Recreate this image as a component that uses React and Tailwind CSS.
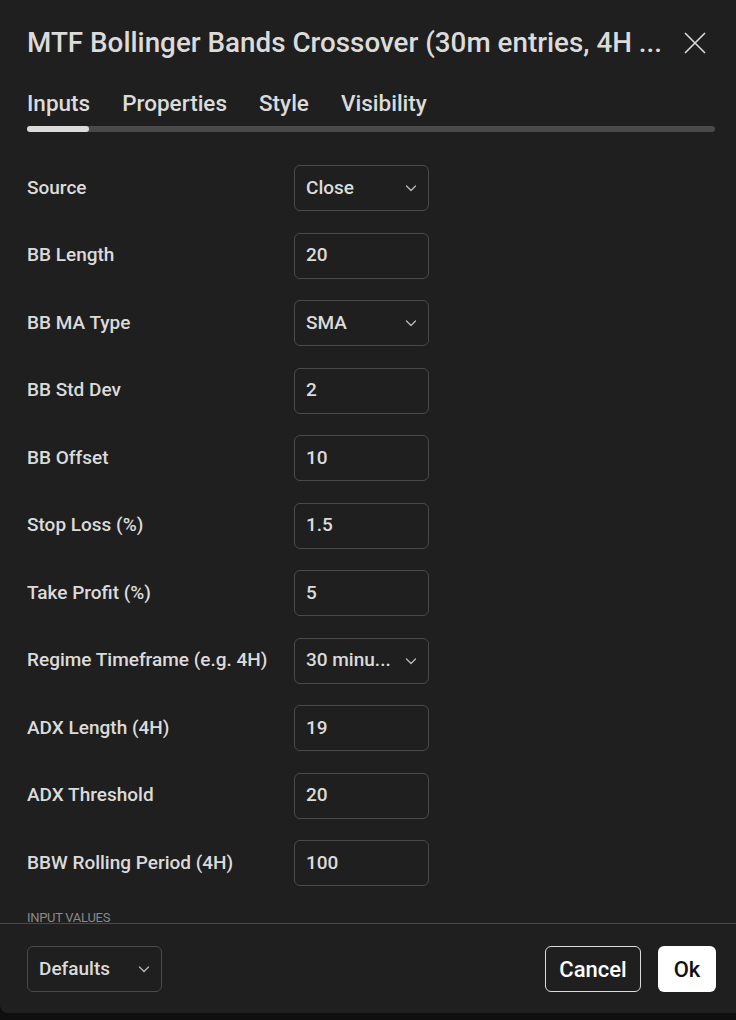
import React from "react";

const rows = [
  { label: "Source", value: "Close", select: true },
  { label: "BB Length", value: "20" },
  { label: "BB MA Type", value: "SMA", select: true },
  { label: "BB Std Dev", value: "2" },
  { label: "BB Offset", value: "10" },
  { label: "Stop Loss (%)", value: "1.5" },
  { label: "Take Profit (%)", value: "5" },
  { label: "Regime Timeframe (e.g. 4H)", value: "30 minu...", select: true },
  { label: "ADX Length (4H)", value: "19" },
  { label: "ADX Threshold", value: "20" },
  { label: "BBW Rolling Period (4H)", value: "100" },
];

function Chevron() {
  return (
    <svg width="14" height="14" viewBox="0 0 14 14" fill="none" className="text-[#b8b8b8]">
      <path d="M2.5 5l4.5 4.5L11.5 5" stroke="currentColor" strokeWidth="1.3" strokeLinecap="round" strokeLinejoin="round" />
    </svg>
  );
}

export default function App() {
  const font = { fontFamily: "Roboto, 'Liberation Sans', sans-serif" };
  return (
    <div className="w-[736px] h-[1020px] bg-[#0f0f0f] overflow-hidden" style={font}>
      <div className="h-[1013px] bg-[#1f1f1f] rounded-bl-lg flex flex-col text-[#dbdbdb]">
        <div className="flex items-center justify-between pl-[27px] pr-[30px] pt-[26px] h-[60px]">
          <div className="text-[27.8px] font-medium leading-[34px] whitespace-nowrap">
            MTF Bollinger Bands Crossover (30m entries, 4H ...
          </div>
          <svg width="22" height="22" viewBox="0 0 22 22" className="text-[#dbdbdb] shrink-0">
            <path d="M1 1L21 21M21 1L1 21" stroke="currentColor" strokeWidth="1.6" />
          </svg>
        </div>
        <div className="pl-[27px] pr-[21px] pt-[28px]">
          <div className="flex gap-[32px] text-[22.5px] font-medium leading-[30px]">
            <span>Inputs</span>
            <span>Properties</span>
            <span>Style</span>
            <span>Visibility</span>
          </div>
          <div className="mt-[8px] h-[6px] rounded-full bg-[#4a4a4a] flex">
            <div className="w-[62px] h-full rounded-full bg-[#dbdbdb]" />
          </div>
        </div>
        <div className="flex-1 overflow-hidden px-[27px] pt-[33px]">
          <div className="flex flex-col gap-[21.5px]">
            {rows.map((r) => (
              <div key={r.label} className="flex items-center h-[46px]">
                <div className="w-[267px] text-[19px] font-medium">{r.label}</div>
                <div className="w-[135px] h-[46px] rounded-md border border-[#4a4a4a] flex items-center justify-between pl-[11px] pr-[10px] text-[19px] font-medium">
                  <span>{r.value}</span>
                  {r.select && <Chevron />}
                </div>
              </div>
            ))}
          </div>
          <div className="mt-[22px] text-[13px] uppercase text-[#8a8a8a] tracking-[-0.3px]">Input values</div>
        </div>
        <div className="border-t border-[#4a4a4a] h-[90px] flex items-center justify-between pr-[20px] pl-[27px] pt-[1px]">
          <div className="w-[135px] h-[46px] rounded-md border border-[#4a4a4a] flex items-center justify-between pl-[11px] pr-[10px] text-[19px] font-medium">
            <span>Defaults</span>
            <Chevron />
          </div>
          <div className="flex gap-[17px]">
            <div className="w-[96px] h-[46px] rounded-md border border-[#dbdbdb] flex items-center justify-center text-[22px] font-medium text-white">
              Cancel
            </div>
            <div className="w-[58px] h-[46px] rounded-md bg-white flex items-center justify-center text-[22px] font-medium text-[#111]">
              Ok
            </div>
          </div>
        </div>
      </div>
    </div>
  );
}
